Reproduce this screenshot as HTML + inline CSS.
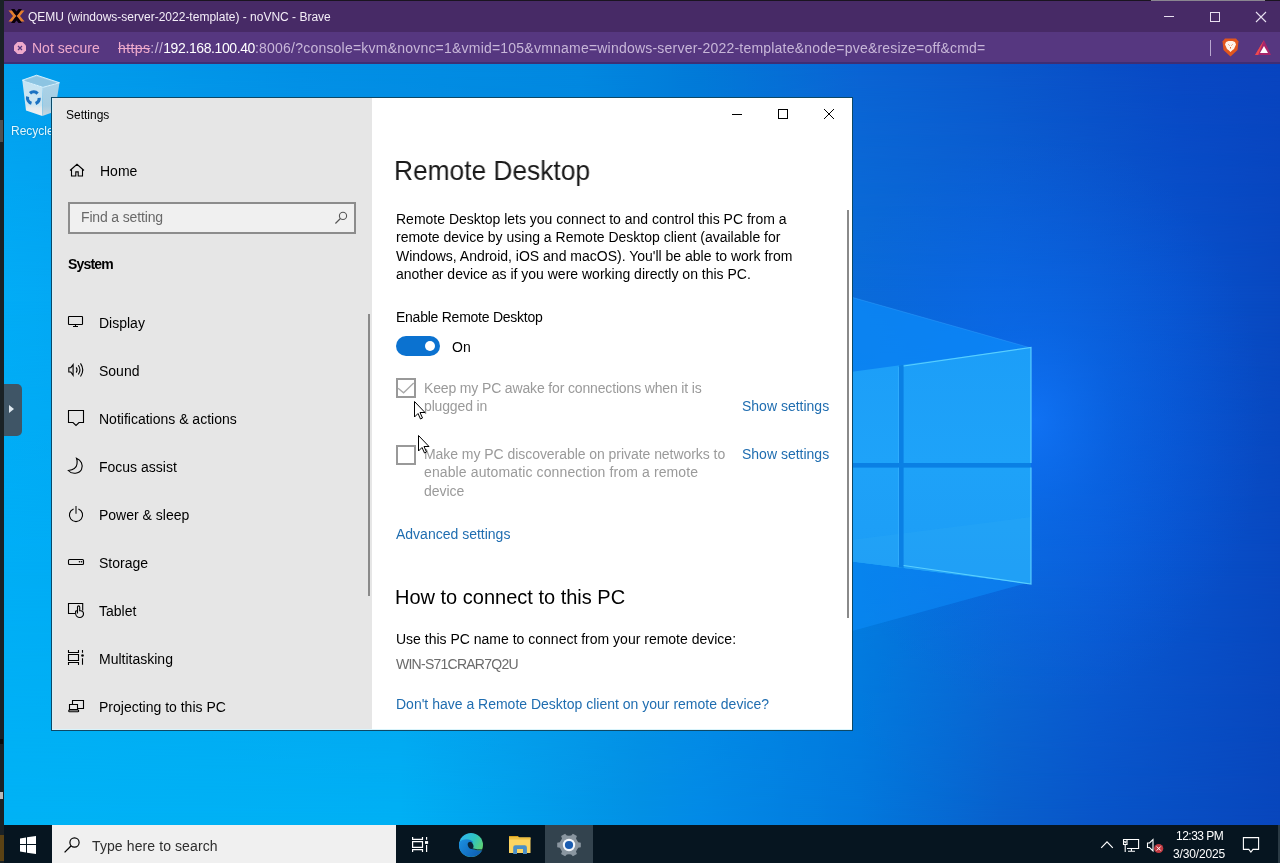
<!DOCTYPE html>
<html><head><meta charset="utf-8">
<style>
*{margin:0;padding:0;box-sizing:border-box}
html,body{width:1280px;height:863px;overflow:hidden;background:#1e1e1e;font-family:"Liberation Sans",sans-serif;-webkit-font-smoothing:antialiased}
.a{position:absolute}
.t{position:absolute;white-space:nowrap;line-height:1}
.t,.body{will-change:transform}
svg{position:absolute;overflow:visible}
#topstrip{left:0;top:0;width:1280px;height:1px;background:#1a1420}
#leftstrip{left:0;top:0;width:4px;height:863px;background:#1a2226}
#titlebar{left:4px;top:1px;width:1276px;height:31px;background:#472a66}
#addrbar{left:4px;top:32px;width:1276px;height:30px;background:#563780}
#addrline{left:4px;top:62px;width:1276px;height:2px;background:#3f2e74}
#desk{left:4px;top:64px;width:1276px;height:761px;overflow:hidden;background:#0a80e0}
.row{position:absolute;left:0;top:0;width:1276px;height:761px}
#row0{background:linear-gradient(90deg,#02a0ee 0px,#0290e6 296px,#0288e0 576px,#027ad8 696px,#0a64d4 856px,#0a58cc 996px,#0848c4 1176px,#0844c0 1276px)}
#row1{background:linear-gradient(90deg,#02acf6 0px,#0898ea 296px,#0288e2 576px,#0278dc 756px,#0a6cd8 856px,#0a64d8 996px,#0a5ad0 1096px,#0852cc 1176px,#0848c0 1276px);
  -webkit-mask-image:linear-gradient(180deg,transparent 0px,#000 236px);mask-image:linear-gradient(180deg,transparent 0px,#000 236px)}
#row2{background:linear-gradient(90deg,#00aef6 0px,#04a4f0 296px,#0896e8 576px,#0286e4 756px,#027ce0 856px,#0a6ad8 996px,#0a5cd4 1096px,#0852cc 1176px,#0848c0 1276px);
  -webkit-mask-image:linear-gradient(180deg,transparent 236px,#000 496px);mask-image:linear-gradient(180deg,transparent 236px,#000 496px)}
#row3{background:linear-gradient(90deg,#00b2f5 0px,#00b0f4 396px,#0290e4 636px,#028ae6 696px,#0278dc 856px,#0860cc 996px,#0854c8 1096px,#0846bc 1276px);
  -webkit-mask-image:linear-gradient(180deg,transparent 496px,#000 761px);mask-image:linear-gradient(180deg,transparent 496px,#000 761px)}
#taskbar{left:4px;top:825px;width:1276px;height:38px;background:#061520}
#win{left:51px;top:97px;width:802px;height:634px;border:1px solid #0d4866;background:#fff;overflow:hidden}
#lp{left:0;top:0;width:320px;height:632px;background:#e6e6e6}
#rp{left:320px;top:0;width:480px;height:632px;background:#fff}
.nav{font-size:14px;color:#000}
.body{font-size:14px;color:#000}
.dis{color:#9a9a9a}
.link{color:#1f6db0}
</style></head><body>
<div class="a" id="topstrip"></div>
<div class="a" id="leftstrip"></div>
<div class="a" style="left:0;top:120px;width:3px;height:22px;background:#505050"></div>
<div class="a" style="left:0;top:739px;width:3px;height:5px;background:#0a0a0a"></div>
<div class="a" style="left:0;top:792px;width:3px;height:7px;background:#b8b8b8"></div>
<div class="a" style="left:1151px;top:0;width:114px;height:1px;background:#8a8690"></div>
<div class="a" id="titlebar"></div>
<div class="a" id="addrbar"></div>
<div class="a" id="addrline"></div>

<!-- proxmox logo -->
<svg style="left:8px;top:9px" width="17" height="14" viewBox="0 0 17 14">
  <path d="M0.5 1.5 L4 1.5 L8.5 7 L4 12.5 L0.5 12.5 L5 7 Z" fill="#e57f2c"/>
  <path d="M16.5 1.5 L13 1.5 L8.5 7 L13 12.5 L16.5 12.5 L12 7 Z" fill="#e57f2c"/>
  <path d="M3 0 L6.5 0 L8.5 2.6 L10.5 0 L14 0 L10.3 5 L8.5 7 L6.7 5 Z" fill="#0a0008"/>
  <path d="M3 14 L6.5 14 L8.5 11.4 L10.5 14 L14 14 L10.3 9 L8.5 7 L6.7 9 Z" fill="#0a0008"/>
</svg>
<div class="t" style="left:28px;top:11px;font-size:12px;color:#f4eef8">QEMU (windows-server-2022-template) - noVNC - Brave</div>
<!-- browser window controls -->
<div class="a" style="left:1164px;top:16px;width:10px;height:1px;background:#e8e0f0"></div>
<div class="a" style="left:1210px;top:12px;width:10px;height:10px;border:1px solid #e8e0f0"></div>
<svg style="left:1256px;top:12px" width="10" height="10" viewBox="0 0 10 10"><path d="M0 0L10 10M10 0L0 10" stroke="#e8e0f0" stroke-width="1.1"/></svg>

<!-- address bar content -->
<svg style="left:14px;top:42px" width="12" height="12" viewBox="0 0 12 12">
  <path d="M3.5 0H8.5L12 3.5V8.5L8.5 12H3.5L0 8.5V3.5Z" fill="#eeaacb"/>
  <path d="M4 4L8 8M8 4L4 8" stroke="#563780" stroke-width="1.2"/>
</svg>
<div class="t" style="left:32px;top:41px;font-size:14px;color:#eeaacb">Not secure</div>
<div class="t" style="left:118px;top:41px;font-size:14px;color:#c7b6d8"><span style="letter-spacing:0.4px"><span style="color:#eeaacb;text-decoration:line-through">https</span>://</span><span style="color:#ffffff;letter-spacing:-0.4px">192.168.100.40</span><span style="letter-spacing:0.215px">:8006/?console=kvm&amp;novnc=1&amp;vmid=105&amp;vmname=windows-server-2022-template&amp;node=pve&amp;resize=off&amp;cmd=</span></div>
<div class="a" style="left:1210px;top:40px;width:1px;height:16px;background:#b9a8cf"></div>
<!-- brave lion -->
<svg style="left:1222px;top:38px" width="17" height="19" viewBox="0 0 17 19">
  <path d="M3 0.5H14L16.5 3.5L15.5 12L8.5 18.5L1.5 12L0.5 3.5Z" fill="#e2561c"/>
  <path d="M4 4L6.5 3H10.5L13 4L14 6.5L12 11L10 12.5L8.5 14L7 12.5L5 11L3 6.5Z" fill="#fff4ea"/>
  <path d="M6.5 6.5L7.5 7.5M10.5 6.5L9.5 7.5M8.5 9V10.5" stroke="#e2561c" stroke-width="0.9"/>
</svg>
<!-- rewards triangle -->
<svg style="left:1255px;top:40px" width="16" height="15" viewBox="0 0 16 15">
  <path d="M9 0L16 15H0Z" fill="#a8246a"/>
  <path d="M9 0L0 15H3.2Z" fill="#ee4a4e"/>
  <path d="M9 6L13 13H5Z" fill="#fff"/>
</svg>

<div class="a" id="desk">
<div class="row" id="row0"></div><div class="row" id="row1"></div><div class="row" id="row2"></div><div class="row" id="row3"></div>
<svg style="left:0;top:0" width="1276" height="761" viewBox="4 64 1276 761">
  <defs>
    <radialGradient id="glow" cx="1035" cy="420" r="230" gradientUnits="userSpaceOnUse" gradientTransform="translate(1035 420) scale(1 1.25) translate(-1035 -420)">
      <stop offset="0" stop-color="#1278ff" stop-opacity="0.7"/>
      <stop offset="0.35" stop-color="#0a6cf4" stop-opacity="0.4"/>
      <stop offset="1" stop-color="#0a60e8" stop-opacity="0"/>
    </radialGradient>
    <linearGradient id="paneT" x1="0" y1="0" x2="0" y2="1">
      <stop offset="0" stop-color="#1c9ef8"/><stop offset="1" stop-color="#20a8fa"/>
    </linearGradient>
    <linearGradient id="paneB" x1="0" y1="0" x2="0" y2="1">
      <stop offset="0" stop-color="#1ea2f8"/><stop offset="1" stop-color="#1c9cf6"/>
    </linearGradient>
    <linearGradient id="beamT" x1="0" y1="0" x2="1" y2="0">
      <stop offset="0" stop-color="#1a96ec" stop-opacity="0.9"/><stop offset="1" stop-color="#2aa0f4" stop-opacity="0.6"/>
    </linearGradient>
  </defs>
  <rect x="4" y="64" width="1276" height="761" fill="url(#glow)"/>
  <!-- beams -->
  <polygon points="600,226 1031,348 1031,380 600,430" fill="#0c8cfa" opacity="0.72"/>
  <path d="M600 226L1031 348" stroke="#40a8ff" stroke-width="1" opacity="0.35"/>
  <polygon points="600,700 1031,582 1031,560 600,520" fill="#0c8cfa" opacity="0.55"/>
  <!-- panes -->
  <polygon points="600,406 1031,347.5 1031,584 600,530" fill="url(#paneT)"/>
  <polygon points="600,468 1031,468 1031,584 600,530" fill="url(#paneB)"/>
  <!-- lower pane reflections -->
  <polygon points="600,572 1031,517 1031,584 600,530" fill="#2aa8f6" opacity="0.3"/>
  <!-- gaps -->
  <clipPath id="logoclip"><polygon points="600,406 1031,347.5 1031,584 600,530"/></clipPath>
  <g clip-path="url(#logoclip)">
  <rect x="899" y="300" width="4.6" height="300" fill="#0a80e4"/>
  <rect x="600" y="463" width="431" height="4.6" fill="#0a80e4"/>
  </g>
  <!-- edges -->
  <path d="M903.6 366L1031 347.5V463M1031 467.6V584L903.6 565.5" fill="none" stroke="#5fd4ff" stroke-width="1.2" opacity="0.9"/>
  <path d="M898.5 367V463M898.5 467.6V565" fill="none" stroke="#3ab4ff" stroke-width="1" opacity="0.6"/>
</svg>
</div>

<!-- recycle bin -->
<svg style="left:0;top:0" width="100" height="140" viewBox="0 0 100 140">
  <defs>
    <linearGradient id="binf" x1="0" y1="80" x2="0" y2="116" gradientUnits="userSpaceOnUse"><stop offset="0" stop-color="#c4e3f3"/><stop offset="0.7" stop-color="#cfe6f1"/><stop offset="0.78" stop-color="#e6ebee"/><stop offset="1" stop-color="#eef0f2"/></linearGradient>
    <linearGradient id="bins" x1="0" y1="82" x2="0" y2="116" gradientUnits="userSpaceOnUse"><stop offset="0" stop-color="#a9d2e8"/><stop offset="0.7" stop-color="#a6cde2"/><stop offset="1" stop-color="#c9d6de"/></linearGradient>
  </defs>
  <path d="M22.3 80.2L42.9 87.4L42.3 115.9L26 110.6Z" fill="url(#binf)"/>
  <path d="M42.9 87.4L59.5 82.7L55 111.5L42.3 115.9Z" fill="url(#bins)"/>
  <path d="M22.3 80.2L36.6 75.2L59.5 82.7L42.9 87.4Z" fill="#9fcde6" stroke="#e2f6ff" stroke-width="0.9"/>
  <path d="M24 80.8L36.6 76.6L57 83L42.9 86.4Z" fill="#8cc4e2"/>
  <g fill="none" stroke="#1b72c2" stroke-width="3.2">
    <path d="M30 93.2A5.6 5.6 0 0 1 37.6 93.6"/>
    <path d="M39.2 97.8A5.6 5.6 0 0 1 35.6 103.4"/>
    <path d="M31.5 103.2A5.6 5.6 0 0 1 27.6 96.6"/>
  </g>
</svg>
<div class="t" style="left:11px;top:125px;font-size:12px;color:#e0f8ff;text-shadow:0 0 2px rgba(0,40,80,.35)">Recycle Bin</div>

<!-- noVNC sidebar handle -->
<div class="a" style="left:4px;top:384px;width:18px;height:52px;background:#3f5566;border-radius:0 5px 5px 0"></div>
<svg style="left:8px;top:404px" width="8" height="10" viewBox="0 0 8 10"><path d="M1 1L6 5L1 9Z" fill="#dfe9f0"/></svg>

<!-- settings window -->
<div class="a" id="win">
  <div class="a" id="lp">
    <div class="t" style="left:14px;top:11px;font-size:12px;color:#000">Settings</div>
    <!-- home -->
    <div class="t nav" style="left:48px;top:66px">Home</div>
    <!-- search -->
    <div class="a" style="left:16px;top:104px;width:288px;height:32px;border:2px solid #8c8c8c;background:#f0f0f0"></div>
    <div class="t" style="left:29px;top:112px;font-size:14px;color:#696969;letter-spacing:-0.15px">Find a setting</div>
    <div class="t" style="left:16px;top:159px;font-size:14px;font-weight:bold;letter-spacing:-0.8px;color:#000">System</div>

    <!-- Display -->
    <div class="t nav" style="left:47px;top:218px">Display</div>
    <!-- Sound -->
    <div class="t nav" style="left:47px;top:266px">Sound</div>
    <!-- Notifications -->
    <div class="t nav" style="left:47px;top:314px">Notifications &amp; actions</div>
    <!-- Focus -->
    <div class="t nav" style="left:47px;top:362px">Focus assist</div>
    <!-- Power -->
    <div class="t nav" style="left:47px;top:410px">Power &amp; sleep</div>
    <!-- Storage -->
    <div class="t nav" style="left:47px;top:458px">Storage</div>
    <!-- Tablet -->
    <div class="t nav" style="left:47px;top:506px">Tablet</div>
    <!-- Multitasking -->
    <div class="t nav" style="left:47px;top:554px">Multitasking</div>
    <!-- Projecting -->
    <div class="t nav" style="left:47px;top:602px">Projecting to this PC</div>
    <!-- left scrollbar -->
    <div class="a" style="left:316px;top:216px;width:2px;height:282px;background:#8a8a8a"></div>
  </div>

  <div class="a" id="rp">
    <!-- window controls -->
    <div class="a" style="left:360px;top:16px;width:10px;height:1px;background:#000"></div>
    <div class="a" style="left:406px;top:11px;width:10px;height:10px;border:1px solid #000"></div>
    <svg style="left:452px;top:11px" width="10" height="10" viewBox="0 0 10 10"><path d="M0 0L10 10M10 0L0 10" stroke="#000" stroke-width="1"/></svg>

    <div class="t" style="left:22px;top:59px;font-size:28px;color:#1a1a1a;transform:scaleX(0.94);transform-origin:0 0">Remote Desktop</div>
    <div class="a body" style="left:24px;top:112px;line-height:18.4px;white-space:nowrap">Remote Desktop lets you connect to and control this PC from a<br>remote device by using a Remote Desktop client (available for<br>Windows, Android, iOS and macOS). You'll be able to work from<br>another device as if you were working directly on this PC.</div>
    <div class="t body" style="left:24px;top:212px;letter-spacing:-0.25px">Enable Remote Desktop</div>
    <!-- toggle -->
    <div class="a" style="left:24px;top:238px;width:44px;height:20px;border-radius:10px;background:#0b72d0"></div>
    <div class="a" style="left:53px;top:243px;width:10px;height:10px;border-radius:5px;background:#fff"></div>
    <div class="t body" style="left:80px;top:242px">On</div>

    <!-- checkbox 1 -->
    <div class="a" style="left:24px;top:280px;width:20px;height:20px;border:2px solid #999"></div>
    <svg style="left:27px;top:285px" width="14" height="10" viewBox="0 0 14 10"><path d="M-0.9 5.2L4.6 9.8L14.7 0" fill="none" stroke="#a8a8a8" stroke-width="1.3"/></svg>
    <div class="a body dis" style="left:52px;top:281px;line-height:18.4px;white-space:nowrap;letter-spacing:-0.15px">Keep my PC awake for connections when it is<br>plugged in</div>
    <div class="t body link" style="left:370px;top:301px">Show settings</div>

    <!-- checkbox 2 -->
    <div class="a" style="left:24px;top:347px;width:20px;height:20px;border:2px solid #999"></div>
    <div class="a body dis" style="left:52px;top:347px;line-height:18.4px;white-space:nowrap;letter-spacing:-0.05px">Make my PC discoverable on private networks to<br><span style="letter-spacing:0.12px">enable automatic connection from a remote</span><br>device</div>
    <div class="t body link" style="left:370px;top:349px">Show settings</div>

    <div class="t body link" style="left:24px;top:429px">Advanced settings</div>
    <div class="t" style="left:23px;top:489px;font-size:20px;color:#000">How to connect to this PC</div>
    <div class="t body" style="left:24px;top:534px">Use this PC name to connect from your remote device:</div>
    <div class="t body" style="left:24px;top:559px;color:#6b6b6b;letter-spacing:-0.75px">WIN-S71CRAR7Q2U</div>
    <div class="t body link" style="left:24px;top:599px">Don't have a Remote Desktop client on your remote device?</div>
    <!-- right scrollbar -->
    <div class="a" style="left:475px;top:112px;width:2px;height:408px;background:#8a8a8a"></div>
  </div>
  <div class="a" style="left:0;top:0;width:1px;height:632px;background:#d2f0fa"></div>
  <div class="a" style="left:0;top:631px;width:800px;height:1px;background:#d8f4fc"></div>
</div>


<!-- left pane icons (page coords) -->
<svg style="left:0;top:0" width="1280" height="863" viewBox="0 0 1280 863">
 <g fill="none" stroke="#000" stroke-width="1.1" stroke-linejoin="miter">
  <path d="M70 170.5L77 164.3L84 170.5M71.5 169V176H75.8V171.9H78.2V176H82.5V169"/>
  <rect x="68.5" y="316.5" width="14" height="8" rx="0.6"/>
  <path d="M75.5 324.5V326.5M73 326.5H78"/>
  <path d="M68.8 367.7H70.8L73.1 364.7V375.3L70.8 372H68.8Z"/>
  <path d="M76.2 367.4Q78 370 76.2 372.6M78.3 365.3Q81.6 370 78.3 374.5M80.5 363.4Q85 370 80.5 376.5"/>
  <path d="M68.5 410.5H83.5V422.5H79L76 425.5L73 422.5H68.5Z"/>
  <path d="M76.5 458.3C81 460 83.5 465 81.5 469.5C79.5 473.5 72 475 68.3 470.5C72.5 470 76.5 468 77 464C77.3 461.5 77 459.5 76.5 458.3Z"/>
  <path d="M73.6 508.9A6.6 6.6 0 1 0 78.4 508.9"/>
  <path d="M76 506V513.7" stroke-width="1.3" stroke="#333"/>
  <rect x="68.5" y="559.5" width="15" height="5" rx="1"/>
  <path d="M75 613.5H68.5V603.5H82.7V610.5"/>
  <path d="M77.5 613.5V607A1.1 1.1 0 0 1 79.7 607V610.8H81A3 3 0 0 1 83.5 613.8A3.6 3.6 0 0 1 79.8 617.5A4.2 4.2 0 0 1 75.6 613.5V611.5A1 1 0 0 1 77.5 611.5"/>
  <path d="M68.5 650V652.5H78.5V650M68.5 654.5H78.5V660.5H68.5ZM68.5 665V662.5H78.5V665M82.5 650V652.7M82.5 658.3V664.7"/>
  <path d="M72.5 704V700.5H83.5V708.5H77.8M69.5 704.5H77.5V709.5H69.5Z"/>
  <rect x="68.7" y="710" width="10" height="1.8" rx="0.9"/>
 </g>
 <circle cx="79.5" cy="561.8" r="0.8" fill="#000"/><circle cx="81.6" cy="561.8" r="0.8" fill="#000"/>
 <circle cx="82.5" cy="655.5" r="1.3" fill="#000"/>
 <circle cx="343" cy="215.9" r="3.6" fill="none" stroke="#555" stroke-width="1.1"/>
 <path d="M340.4 218.5L335.4 223.5" stroke="#555" stroke-width="1.2"/>
</svg>
<!-- mouse cursors -->
<svg style="left:414px;top:401px" width="12" height="19" viewBox="0 0 12 19"><path d="M0.5 0.5V16L4 12.5L6.5 18L8.5 17L6 11.5H11Z" fill="#fff" stroke="#000" stroke-width="1"/></svg>
<svg style="left:418px;top:435px" width="12" height="19" viewBox="0 0 12 19"><path d="M0.5 0.5V16L4 12.5L6.5 18L8.5 17L6 11.5H11Z" fill="#fff" stroke="#000" stroke-width="1"/></svg>

<!-- taskbar -->
<div class="a" id="taskbar"></div>
<div class="a" style="left:0;top:835px;width:4px;height:26px;background:#5a4214"></div>
<svg style="left:0;top:0" width="1280" height="863" viewBox="0 0 1280 863">
  <!-- start logo -->
  <path d="M20 838.4L26 837.5V844H20ZM27 837.3L36 836.1V844H27ZM20 845H26V852.5L20 851.6ZM27 845H36V853.9L27 852.7Z" fill="#fff"/>
  <!-- search box -->
  <rect x="52" y="825" width="344" height="38" fill="#f0f0f0"/>
  <circle cx="74.5" cy="842.5" r="4.6" fill="none" stroke="#000" stroke-width="1.2"/>
  <path d="M71.2 845.8L64.6 852.4" stroke="#000" stroke-width="1.3"/>
  <!-- task view -->
  <g fill="none" stroke="#fff" stroke-width="1.2">
    <path d="M412.6 837V839.4H422.5V837M412.6 841.6H422.5V847.4H412.6ZM412.6 852V849.6H422.5V852M426.6 837V839.7M426.6 845V852"/>
  </g>
  <rect x="425" y="841.1" width="3.1" height="2.8" fill="#fff"/>
  <!-- edge -->
  <defs>
    <linearGradient id="eg1" x1="460" y1="836" x2="483" y2="850" gradientUnits="userSpaceOnUse"><stop offset="0" stop-color="#2fb5f2"/><stop offset="0.5" stop-color="#2fc4c0"/><stop offset="1" stop-color="#67d465"/></linearGradient>
    <linearGradient id="eg2" x1="460" y1="840" x2="480" y2="857" gradientUnits="userSpaceOnUse"><stop offset="0" stop-color="#1b8ee0"/><stop offset="1" stop-color="#0d5cb0"/></linearGradient>
  </defs>
  <circle cx="471" cy="845" r="12" fill="url(#eg1)"/>
  <path d="M459.2 842.5C462 838.5 470.5 838 473.3 842.2C470.2 842.8 468.5 845.5 470.3 847.6C473 850.3 478.5 850.6 482.3 850.3C480 854.5 475.5 857 471 857A12 12 0 0 1 459.2 842.5Z" fill="url(#eg2)"/>
  <ellipse cx="470.6" cy="845.4" rx="2.7" ry="3.7" fill="#0a2438" transform="rotate(-20 470.6 845.4)"/><path d="M472 848.6Q477 850.3 482.6 849.9" fill="none" stroke="#0a2438" stroke-width="0.9"/>
  <!-- explorer -->
  <path d="M509 836H518L519.5 838H509Z" fill="#d9a21e"/>
  <rect x="509" y="837.5" width="21.5" height="15.5" fill="#fcd462"/>
  <rect x="509" y="837.5" width="21.5" height="2" fill="#f0c040"/>
  <path d="M513.2 854V847.5Q513.2 845.3 515.4 845.3H524.7Q526.9 845.3 526.9 847.5V854H523V849H517V854Z" fill="#4a8fc8"/>
  <!-- settings active -->
  <rect x="545" y="825" width="48" height="38" fill="#33434e"/>
  <path d="M578.2 842.2 L580.8 842.7 L580.8 847.3 L578.2 847.8 L577.1 849.6 L576.0 851.5 L576.9 854.1 L572.9 856.3 L571.2 854.4 L569.0 854.3 L566.8 854.4 L565.1 856.3 L561.1 854.1 L562.0 851.5 L560.9 849.6 L559.8 847.8 L557.2 847.3 L557.2 842.7 L559.8 842.2 L560.9 840.4 L562.0 838.5 L561.1 835.9 L565.1 833.7 L566.8 835.6 L569.0 835.7 L571.2 835.6 L572.9 833.7 L576.9 835.9 L576.0 838.5 L577.1 840.4Z" fill="#8a96a0"/>
  <circle cx="569" cy="845" r="6.2" fill="#f4f8fc"/>
  <circle cx="569" cy="845" r="4.1" fill="#1a5cb0"/>
  <!-- tray -->
  <path d="M1101.2 847.9L1107 841.9L1112.8 847.9" fill="none" stroke="#fff" stroke-width="1.2"/>
  <g fill="none" stroke="#fff" stroke-width="1.1">
    <path d="M1127 839.5H1138.6V848.5H1127M1131.4 848.5V851M1128 851.3H1135"/>
    <path d="M1123.5 839.5H1127V844.5H1123.5ZM1125.2 844.5V852M1124.3 841.4L1125.2 842.6L1126.1 841.4"/>
    <path d="M1147.5 843H1149.5L1153 839.5V851L1149.5 847.5H1147.5Z"/>
  </g>
  <circle cx="1158.7" cy="848.5" r="4.6" fill="#c13a42"/>
  <path d="M1156.7 846.5L1160.7 850.5M1160.7 846.5L1156.7 850.5" stroke="#fff" stroke-width="1"/>
  <path d="M1243.4 837.6H1258.6V849.4H1253L1250.9 852.2L1248.8 849.4H1243.4Z" fill="none" stroke="#fff" stroke-width="1.1"/>
</svg>
<div class="a" style="left:1278px;top:825px;width:2px;height:38px;background:#2a3a44"></div>
<div class="t" style="left:92px;top:839px;font-size:14px;color:#2e2e2e;letter-spacing:0.1px">Type here to search</div>
<div class="t" style="left:1176px;top:830px;font-size:12px;color:#fff;letter-spacing:-0.5px">12:33 PM</div>
<div class="t" style="left:1173px;top:848px;font-size:12px;color:#fff;letter-spacing:-0.15px">3/30/2025</div>
</body></html>
